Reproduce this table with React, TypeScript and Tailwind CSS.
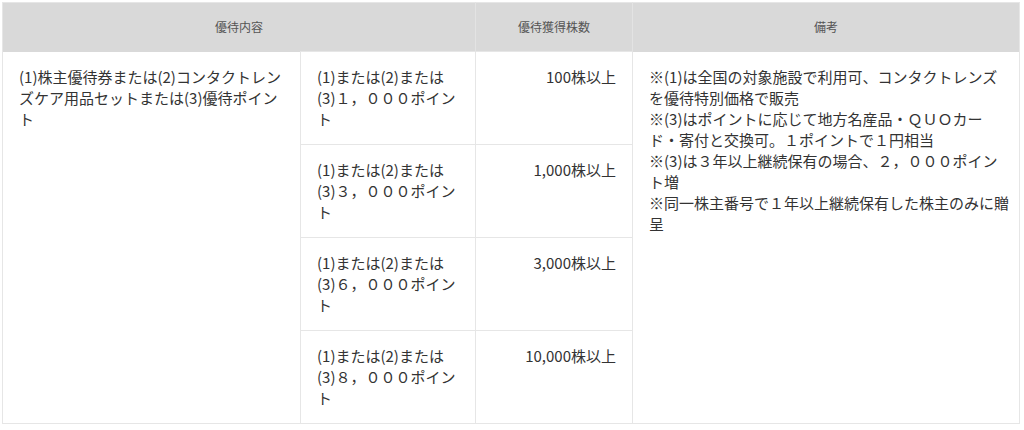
const rows = [
  { points: ['(1)または(2)または', '(3)１，０００ポイン', 'ト'], shares: '100株以上' },
  { points: ['(1)または(2)または', '(3)３，０００ポイン', 'ト'], shares: '1,000株以上' },
  { points: ['(1)または(2)または', '(3)６，０００ポイン', 'ト'], shares: '3,000株以上' },
  { points: ['(1)または(2)または', '(3)８，０００ポイン', 'ト'], shares: '10,000株以上' },
];

// line breaks follow the original rendering
const notes = [
  '※(1)は全国の対象施設で利用可、コンタクトレンズ',
  'を優待特別価格で販売',
  '※(3)はポイントに応じて地方名産品・ＱＵＯカー',
  'ド・寄付と交換可。１ポイントで１円相当',
  '※(3)は３年以上継続保有の場合、２，０００ポイン',
  'ト増',
  '※同一株主番号で１年以上継続保有した株主のみに贈',
  '呈',
];

const content = ['(1)株主優待券または(2)コンタクトレン', 'ズケア用品セットまたは(3)優待ポイン', 'ト'];

const Lines = ({ lines }: { lines: string[] }) => (
  <>
    {lines.map((l, i) => (
      <div key={i} className="whitespace-nowrap">
        {l}
      </div>
    ))}
  </>
);

export default function App() {
  return (
    <div className="w-[1024px] h-[430px] bg-white pt-[2px] pl-[2px] font-['Noto_Sans_CJK_JP','Liberation_Sans',sans-serif] text-[#333]">
      <table className="w-[1017px] table-fixed border-collapse border border-[#e6e6e6]">
        <colgroup>
          <col className="w-[298px]" />
          <col className="w-[175px]" />
          <col className="w-[157px]" />
          <col className="w-[387px]" />
        </colgroup>
        <thead>
          <tr className="h-[49px] bg-[#d9d9d9] text-[12px] text-[#555]">
            <th colSpan={2} className="font-normal text-center border-r border-[#e3e3e3]">優待内容</th>
            <th className="font-normal text-center border-r border-[#e3e3e3]">優待獲得株数</th>
            <th className="font-normal text-center">備考</th>
          </tr>
        </thead>
        <tbody className="text-[15px] leading-[21px]">
          {rows.map((row, i) => (
            <tr key={row.shares} className="h-[93px]">
              {i === 0 && (
                <td rowSpan={4} className="align-top pl-4 pr-2 pt-[14px] border-r border-[#e6e6e6]">
                  <Lines lines={content} />
                </td>
              )}
              <td className="align-top pl-4 pr-1 pt-[14px] border border-[#e6e6e6]">
                <Lines lines={row.points} />
              </td>
              <td className="align-top px-4 pt-[14px] text-right border border-[#e6e6e6]">{row.shares}</td>
              {i === 0 && (
                <td rowSpan={4} className="align-top pl-4 pr-2 pt-[14px] border-l border-[#e6e6e6]">
                  <Lines lines={notes} />
                </td>
              )}
            </tr>
          ))}
        </tbody>
      </table>
    </div>
  );
}
